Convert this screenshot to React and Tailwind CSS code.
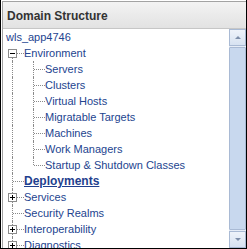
import React from 'react';

const tree = [
  { label: 'wls_app4746', cols: [] },
  { label: 'Environment', cols: ['F'], box: 'minus' },
  { label: 'Servers', cols: ['I', 'T'] },
  { label: 'Clusters', cols: ['I', 'T'] },
  { label: 'Virtual Hosts', cols: ['I', 'T'] },
  { label: 'Migratable Targets', cols: ['I', 'T'] },
  { label: 'Machines', cols: ['I', 'T'] },
  { label: 'Work Managers', cols: ['I', 'T'] },
  { label: 'Startup & Shutdown Classes', cols: ['I', 'L'] },
  { label: 'Deployments', cols: ['T'], bold: true },
  { label: 'Services', cols: ['T'], box: 'plus' },
  { label: 'Security Realms', cols: ['T'] },
  { label: 'Interoperability', cols: ['T'], box: 'plus' },
  { label: 'Diagnostics', cols: ['T'], box: 'plus' },
];

const Guide = ({ type, box, last }) => (
  <div className="relative w-[21px] h-[16px] shrink-0">
    {type !== ' ' && (
      <div
        className={
          'absolute left-[9px] w-0 border-l border-dotted border-[#8a8a8a] ' +
          (type === 'F' ? 'top-[8px] bottom-0' : type === 'L' ? 'top-0 h-[8px]' : 'top-0 bottom-0')
        }
      />
    )}
    {last && type !== 'I' && (
      <div className="absolute left-[10px] right-0 top-[8px] h-0 border-t border-dotted border-[#8a8a8a]" />
    )}
    {last && box && (
      <div className="absolute left-[5px] top-[4px] w-[9px] h-[9px] border border-[#8c8c8c] bg-white flex items-center justify-center">
        <div className="relative w-[5px] h-[5px]">
          <div className="absolute left-0 top-[2px] w-[5px] h-[1px] bg-black" />
          {box === 'plus' && <div className="absolute left-[2px] top-0 w-[1px] h-[5px] bg-black" />}
        </div>
      </div>
    )}
  </div>
);

const ScrollButton = ({ up }) => (
  <div className="h-[17px] border border-[#a9bad4] bg-gradient-to-b from-[#eef3fa] to-[#d7e2f1] flex items-center justify-center">
    <div
      className={
        'w-0 h-0 border-l-[3px] border-r-[3px] border-l-transparent border-r-transparent ' +
        (up ? 'border-b-[3px] border-b-[#7d8ea9]' : 'border-t-[3px] border-t-[#7d8ea9]')
      }
    />
  </div>
);

export default function App() {
  return (
    <div
      className="w-[247px] h-[249px] bg-white border-l border-r border-b border-black pt-[1px] pl-[1px] flex flex-col overflow-hidden"
      style={{ fontFamily: '"Liberation Sans", Arial, sans-serif' }}
    >
      <div className="flex-1 min-h-0 border-t border-l border-[#a3a3a3] flex flex-col">
        <div className="h-[27px] shrink-0 bg-gradient-to-b from-[#f3f3f3] to-[#e2e2e2] border-b border-[#c6c6c6] flex items-center pl-[4px] pt-[2px]">
          <span className="text-[12px] font-bold text-[#333333]">Domain Structure</span>
        </div>
        <div className="flex-1 min-h-0 flex">
          <div className="flex-1 overflow-hidden">
            {tree.map((row, i) => (
              <div key={i} className="h-[16px] flex items-center whitespace-nowrap">
                {row.cols.length === 0 && <div className="w-[3px] shrink-0" />}
                {row.cols.map((c, j) => (
                  <Guide key={j} type={c} box={row.box} last={j === row.cols.length - 1} />
                ))}
                {row.bold ? (
                  <span className="text-[12px] font-bold underline text-[#1f3f8e] leading-[16px]">{row.label}</span>
                ) : (
                  <span className="text-[11px] text-[#23448f] leading-[16px]">{row.label}</span>
                )}
              </div>
            ))}
          </div>
          <div className="w-[17px] shrink-0 flex flex-col bg-[#e6edf7]">
            <ScrollButton up />
            <div className="flex-1 border border-[#a9bad4] bg-[#c8d8ee] mt-[1px] mb-[1px] rounded-[1px]" />
            <ScrollButton />
          </div>
        </div>
      </div>
    </div>
  );
}
